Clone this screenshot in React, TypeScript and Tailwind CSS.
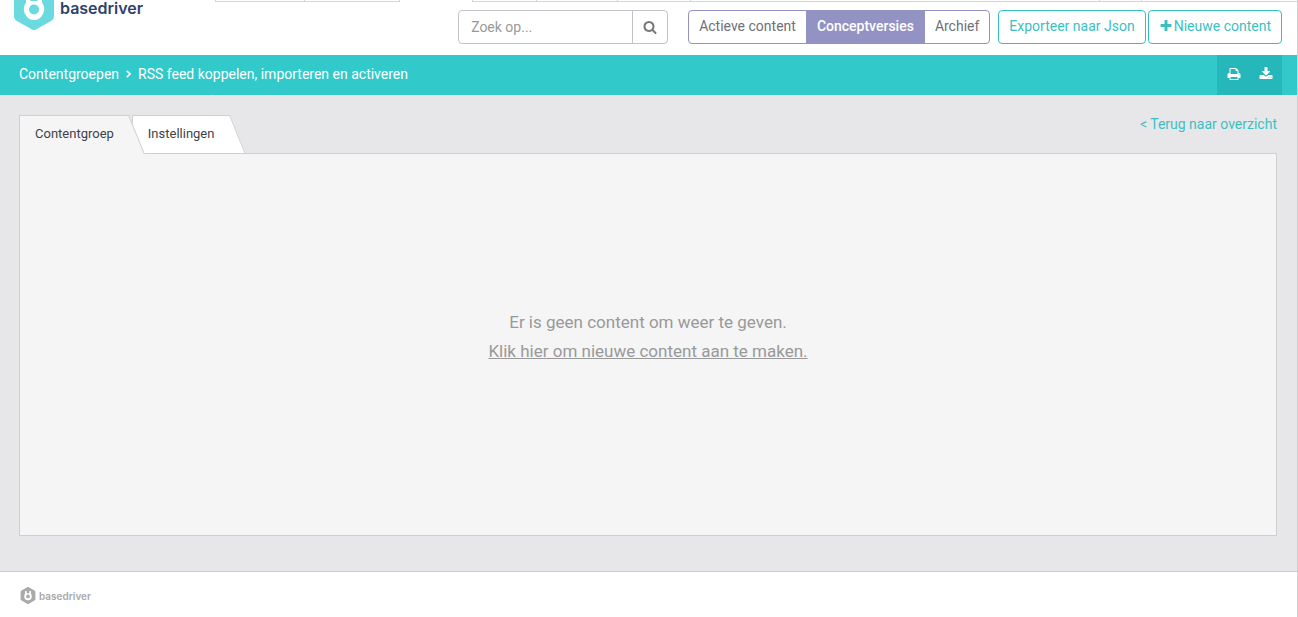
import { useState } from "react";

const icons = {
  search:
    "M1216 832q0-185-131.5-316.5t-316.5-131.5-316.5 131.5-131.5 316.5 131.5 316.5 316.5 131.5 316.5-131.5 131.5-316.5zm512 832q0 52-38 90t-90 38q-54 0-90-38l-343-342q-179 124-399 124-143 0-273.5-55.5t-225-150-150-225-55.5-273.5 55.5-273.5 150-225 225-150 273.5-55.5 273.5 55.5 225 150 150 225 55.5 273.5q0 220-124 399l343 343q37 37 37 90z",
  plus:
    "M1600 736v192q0 40-28 68t-68 28h-416v416q0 40-28 68t-68 28h-192q-40 0-68-28t-28-68v-416h-416q-40 0-68-28t-28-68v-192q0-40 28-68t68-28h416v-416q0-40 28-68t68-28h192q40 0 68 28t28 68v416h416q40 0 68 28t28 68z",
  print:
    "M448 1536h896v-256h-896v256zm0-640h896v-384h-160q-40 0-68-28t-28-68v-160h-640v640zm1152 64q0-26-19-45t-45-19-45 19-19 45 19 45 45 19 45-19 19-45zm128 0v416q0 13-9.5 22.5t-22.5 9.5h-224v160q0 40-28 68t-68 28h-960q-40 0-68-28t-28-68v-160h-224q-13 0-22.5-9.5t-9.5-22.5v-416q0-79 56.5-135.5t135.5-56.5h64v-544q0-40 28-68t68-28h672q40 0 88 20t76 48l152 152q28 28 48 76t20 88v256h64q79 0 135.5 56.5t56.5 135.5z",
  download:
    "M1344 1344q0-26-19-45t-45-19-45 19-19 45 19 45 45 19 45-19 19-45zm256 0q0-26-19-45t-45-19-45 19-19 45 19 45 45 19 45-19 19-45zm128-224v320q0 40-28 68t-68 28h-1472q-40 0-68-28t-28-68v-320q0-40 28-68t68-28h465l135 136q58 56 136 56t136-56l136-136h464q40 0 68 28t28 68zm-325-569q17 41-14 70l-448 448q-18 19-45 19t-45-19l-448-448q-31-29-14-70 17-39 59-39h256v-448q0-26 19-45t45-19h256q26 0 45 19t19 45v448h256q42 0 59 39z",
};

const Icon = ({ name, className }: { name: keyof typeof icons; className: string }) => (
  <svg viewBox="0 0 1792 1792" fill="currentColor" aria-hidden="true" className={className}>
    <path d={icons[name]} />
  </svg>
);

const LogoMark = ({ className }: { className: string }) => (
  <svg viewBox="0 0 40 46" aria-hidden="true" className={className}>
    <path
      fill="currentColor"
      d="M17.5.8a5 5 0 0 1 5 0l15 8.4A5 5 0 0 1 40 13.5v19a5 5 0 0 1-2.5 4.3l-15 8.5a5 5 0 0 1-5 0l-15-8.5A5 5 0 0 1 0 32.5v-19a5 5 0 0 1 2.5-4.3z"
    />
    <path
      fill="#fff"
      d="M12 12q0-2 2.200-2t2.300 2v5h7v-5q0-2 2.300-2t2.200 2v6.500q2.200 2.500 2.200 6.500a10.200 11 0 0 1-20.400 0q0-4 2.200-6.500z"
    />
    <circle cx="20" cy="25.5" r="5" fill="currentColor" />
  </svg>
);

const Header = () => {
  const [filter, setFilter] = useState("Conceptversies");

  return (
    <header className="flex h-[55px] overflow-hidden bg-white">
      <a href="#" className="flex w-[215px] shrink-0 items-start gap-1.5 pl-3.5">
        <LogoMark className="-mt-4 h-[46px] w-10 shrink-0 text-[#6bdadf]" />
        <span className="font-['Inter',sans-serif] text-base leading-4 font-semibold text-[#2f416b]">
          basedriver
        </span>
      </a>
      <div className="flex-1">
        {/* menu bar, scrolled almost out of view */}
        <div className="flex h-0.5">
          <div className="flex w-[185px] divide-x divide-gray-300 border-x border-b border-gray-300">
            <div className="w-[89px]" />
            <div className="flex-1" />
          </div>
          <div className="ml-[72px] flex flex-1 divide-x divide-gray-300 border-b border-l border-gray-300">
            <div className="w-16" />
            <div className="w-[81px]" />
            <div className="w-[73px]" />
            <div className="flex-1" />
            <div className="w-[42px]" />
            <div className="w-[155px]" />
          </div>
        </div>
        <div className="mt-2 flex h-[34px] justify-end pr-[15px] text-sm whitespace-nowrap">
          <form className="mr-5 flex w-[210px] rounded border border-[#c2c2c8]">
            <input
              type="text"
              aria-label="Zoek op"
              placeholder="Zoek op..."
              className="min-w-0 flex-1 px-3 text-[#555] outline-none placeholder:text-[#999]"
            />
            <button
              type="button"
              aria-label="Zoeken"
              className="flex w-[35px] items-center justify-center border-l border-[#c2c2c8] text-[#777]"
            >
              <Icon name="search" className="size-3.5" />
            </button>
          </form>
          <div className="mr-2 flex">
            {["Actieve content", "Conceptversies", "Archief"].map((label) => (
              <button
                key={label}
                type="button"
                onClick={() => setFilter(label)}
                className={
                  filter === label
                    ? "-ml-px border border-[#9293c2] bg-[#9293c2] px-2.5 pb-0.5 font-medium text-white first:ml-0 first:rounded-l last:rounded-r"
                    : "-ml-px border border-[#9293c2] px-2.5 pb-0.5 text-[#6f6f78] first:ml-0 first:rounded-l last:rounded-r"
                }
              >
                {label}
              </button>
            ))}
          </div>
          <button
            type="button"
            className="mr-0.5 rounded border border-[#32c0c2] px-2.5 pb-0.5 text-[#3cbfc2]"
          >
            Exporteer naar Json
          </button>
          <button
            type="button"
            className="flex items-center gap-px rounded border border-[#32c0c2] px-2.5 pb-0.5 text-[#3cbfc2]"
          >
            <Icon name="plus" className="size-3.5" />
            Nieuwe content
          </button>
        </div>
      </div>
    </header>
  );
};

const TitleBar = () => (
  <div className="flex h-10 justify-between bg-[#32c9ca] pr-[15px] pl-[19px] text-sm text-white">
    <nav className="flex items-center gap-1.5 pb-0.5">
      <a href="#">Contentgroepen</a>
      <svg viewBox="0 0 6 8" fill="none" stroke="currentColor" strokeWidth="1.6" className="h-2 w-[7px]">
        <path d="M1.2.8 4.6 4 1.2 7.2" />
      </svg>
      <span>RSS feed koppelen, importeren en activeren</span>
    </nav>
    <div className="flex w-[65px] bg-[#25b7b9] pb-0.5">
      <button type="button" aria-label="Afdrukken" className="flex flex-1 items-center justify-center">
        <Icon name="print" className="size-3.5" />
      </button>
      <button type="button" aria-label="Downloaden" className="flex w-8 items-center justify-center">
        <Icon name="download" className="size-3.5" />
      </button>
    </div>
  </div>
);

const Tabs = () => (
  <div className="flex text-[13px] text-[#3f3f4a]">
    <button
      type="button"
      className="relative isolate z-10 -mb-px h-[39px] border-t border-l border-[#cfcfd1] bg-[#f5f5f5] pr-[15px] pb-0.5 pl-[15px] after:absolute after:-top-px after:right-0 after:-z-10 after:h-[39px] after:w-6 after:origin-top-right after:skew-x-[22deg] after:border-t after:border-r after:border-[#cfcfd1] after:bg-[#f5f5f5]"
    >
      Contentgroep
    </button>
    <button
      type="button"
      className="relative isolate ml-[3px] h-[38px] border-t border-l border-[#cfcfd1] bg-white pr-4 pb-0.5 pl-[15px] after:absolute after:-top-px after:right-0 after:-z-10 after:h-[38px] after:w-6 after:origin-top-right after:skew-x-[22deg] after:border-t after:border-r after:border-[#cfcfd1] after:bg-white"
    >
      Instellingen
    </button>
  </div>
);

export default function App() {
  return (
    <div className="flex min-h-screen flex-col border-r border-[#cfcfd1] bg-white font-[Roboto,sans-serif]">
      <Header />
      <TitleBar />
      <main className="border-b border-[#cbcbcd] bg-[#e7e7e9] px-5 pt-5 pb-[35px] pl-[19px]">
        <div className="flex items-start justify-between">
          <Tabs />
          <a href="#" className="text-sm leading-[18px] text-[#3cbfc2]">
            &lt; Terug naar overzicht
          </a>
        </div>
        <section className="border border-[#cfcfd1] bg-[#f5f5f5] pt-[154px] pb-[169px] text-center text-[17px] leading-[29px] text-[#999]">
          <p>Er is geen content om weer te geven.</p>
          <a href="#" className="underline">
            Klik hier om nieuwe content aan te maken.
          </a>
        </section>
      </main>
      <footer className="flex items-center gap-[3px] px-5 py-[15px] text-[#aaa]">
        <LogoMark className="h-[17px] w-4" />
        <span className="font-['Inter',sans-serif] text-[10px] leading-4 font-semibold">basedriver</span>
      </footer>
    </div>
  );
}
